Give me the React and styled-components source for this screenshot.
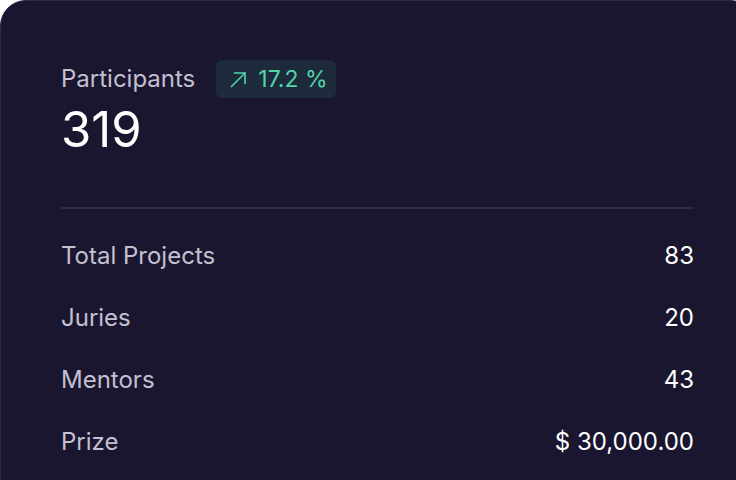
import React from 'react';
import styled, { createGlobalStyle } from 'styled-components';

const GlobalStyle = createGlobalStyle`
  html, body {
    margin: 0;
    padding: 0;
    background: #ffffff;
    overflow: hidden;
  }
  body {
    font-family: Inter, "Noto Sans", sans-serif;
  }
`;

const Card = styled.div`
  box-sizing: border-box;
  width: 756px;
  min-height: 520px;
  background-color: #1a162f;
  border: 1px solid #2c2944;
  border-radius: 26px;
  padding: 59px 61px 40px 60px;
`;

const Header = styled.div`
  display: flex;
  align-items: center;
  gap: 21px;
`;

const Label = styled.span`
  font-size: 24px;
  color: #c3c0d1;
  line-height: 38px;
`;

const Badge = styled.span`
  display: inline-flex;
  align-items: center;
  gap: 11px;
  height: 38px;
  padding: 0 9px 0 14px;
  border-radius: 6px;
  background-color: #1c2a3b;
  color: #4fd6a8;
  font-size: 23px;
`;

const Total = styled.div`
  margin-top: 3px;
  font-size: 49px;
  line-height: 58px;
  color: #ffffff;
`;

const Divider = styled.hr`
  margin: 48px 0 16px;
  border: none;
  height: 1.5px;
  background-color: #2e2b43;
`;

const List = styled.div`
  display: flex;
  flex-direction: column;
`;

const Row = styled.div`
  display: flex;
  align-items: center;
  justify-content: space-between;
  height: 62px;
  font-size: 24px;
`;

const RowLabel = styled.span`
  color: #c3c0d1;
`;

const RowValue = styled.span`
  color: #ffffff;
`;

const ArrowUpRight = () => (
  <svg width="17" height="17" viewBox="0 0 17 17" fill="none" stroke="currentColor" strokeWidth="1.6" strokeLinecap="round" strokeLinejoin="round">
    <path d="M1.5 15.5 L15 2" />
    <path d="M4.5 2 H15 V12.5" />
  </svg>
);

const stats = [
  { label: 'Total Projects', value: '83' },
  { label: 'Juries', value: '20' },
  { label: 'Mentors', value: '43' },
  { label: 'Prize', value: '$ 30,000.00' },
];

const App = () => (
  <>
    <GlobalStyle />
    <Card>
      <Header>
        <Label>Participants</Label>
        <Badge>
          <ArrowUpRight />
          17.2 %
        </Badge>
      </Header>
      <Total>319</Total>
      <Divider />
      <List>
        {stats.map((s) => (
          <Row key={s.label}>
            <RowLabel>{s.label}</RowLabel>
            <RowValue>{s.value}</RowValue>
          </Row>
        ))}
      </List>
    </Card>
  </>
);

export default App;
